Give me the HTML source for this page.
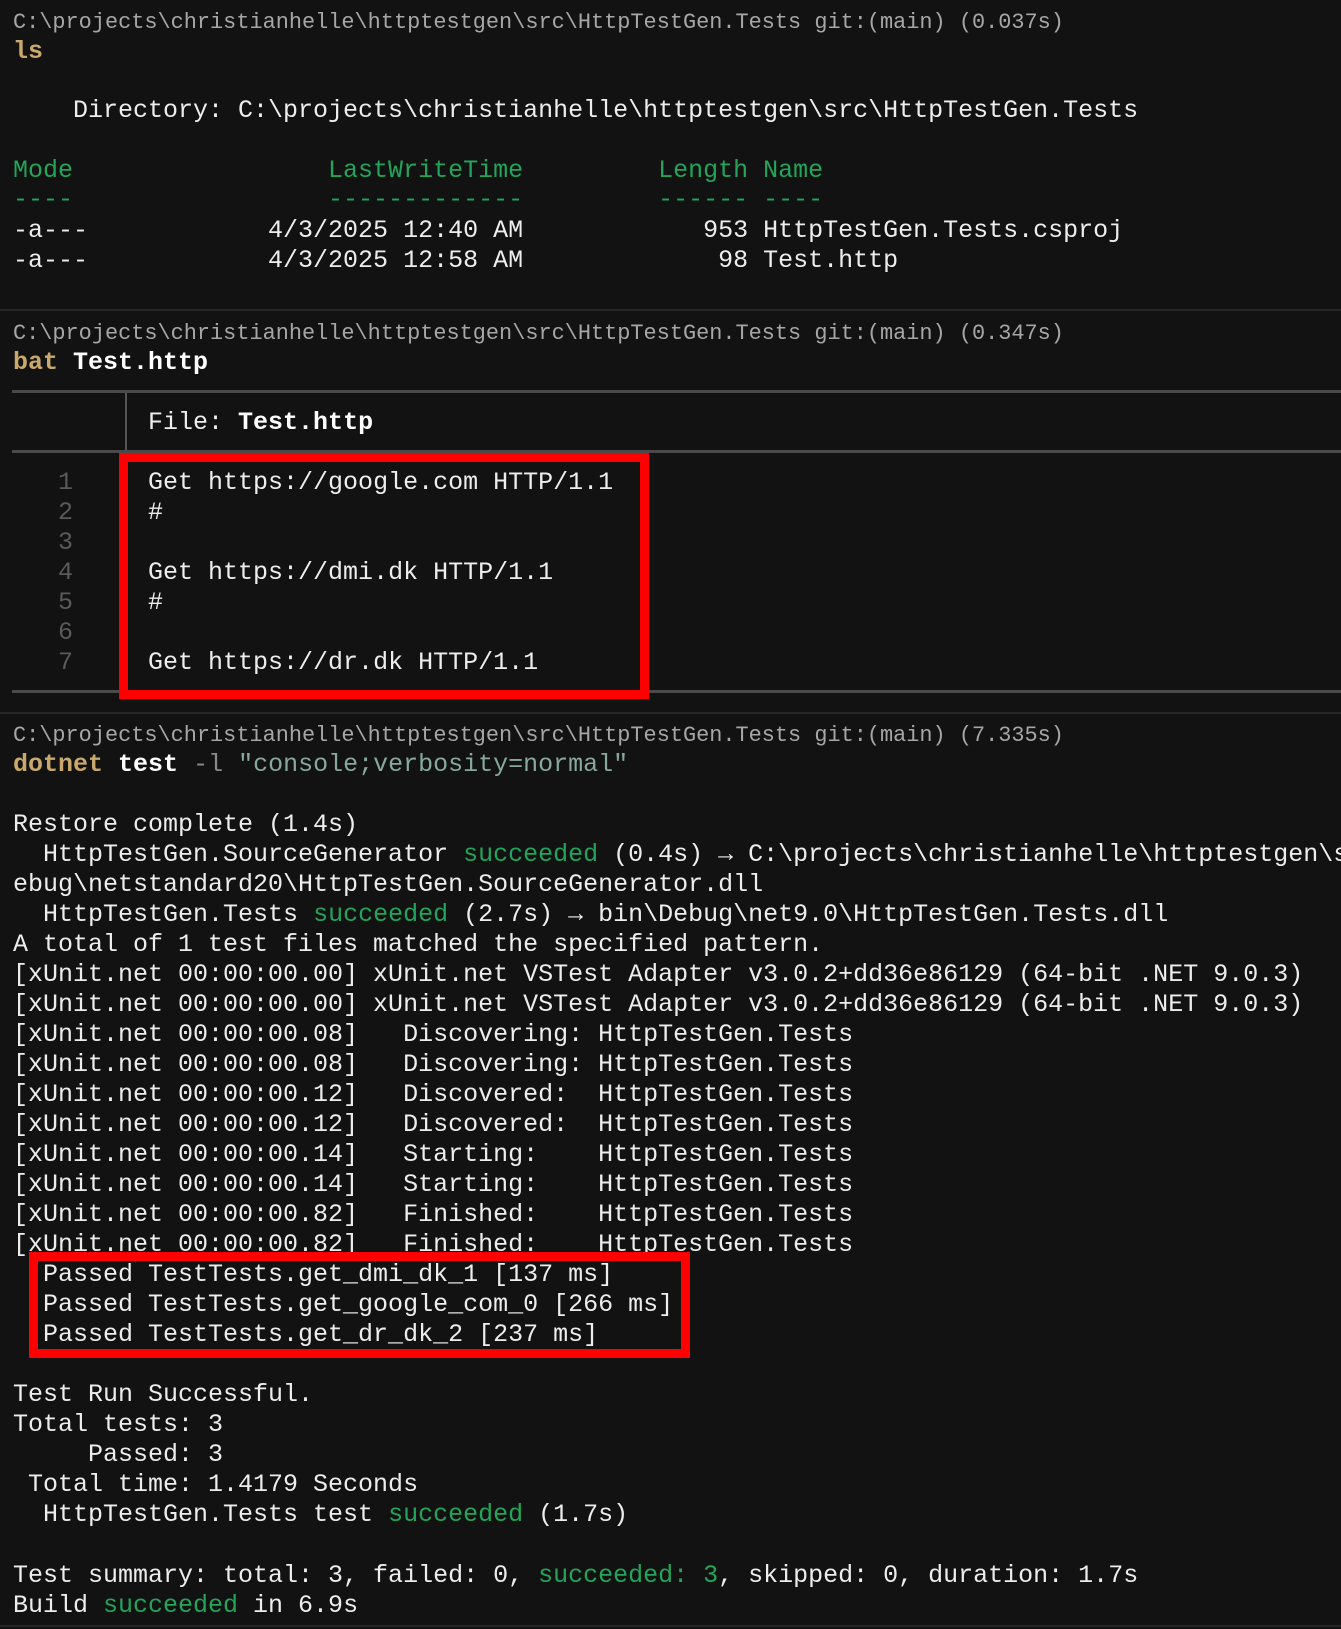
<!DOCTYPE html>
<html><head><meta charset="utf-8"><style>
html,body{margin:0;padding:0;background:#121212;width:1341px;height:1629px;overflow:hidden;position:relative}
.l{position:absolute;left:13px;height:30px;line-height:30px;white-space:pre;font-family:"Liberation Mono","DejaVu Sans Mono",monospace;font-size:25px;color:#ededed;margin-top:2px}
.p{font-size:21.9px;color:#a6a6a6}
.g{color:#22a55a}
.y{color:#c9a86c;font-weight:bold}
.b{font-weight:bold;color:#fff}
.d{color:#8a8a8a}
.s{color:#86a89d}
.n{color:#5a5a5a}
.sep{position:absolute;left:0;width:1341px;height:2px;background:#262626}
.rule{position:absolute;left:12px;width:1329px;height:3px;background:#4a4a4a}
.box{position:absolute;border:9px solid #ff0000;box-sizing:border-box}
</style></head><body>
<div class="l p" style="top:6px">C:\projects\christianhelle\httptestgen\src\HttpTestGen.Tests git:(main) (0.037s)</div>
<div class="l y" style="top:35px">ls</div>
<div class="l" style="top:94px">    Directory: C:\projects\christianhelle\httptestgen\src\HttpTestGen.Tests</div>
<div class="l g" style="top:154px">Mode                 LastWriteTime         Length Name</div>
<div class="l g" style="top:183px">----                 -------------         ------ ----</div>
<div class="l" style="top:214px">-a---            4/3/2025 12:40 AM            953 HttpTestGen.Tests.csproj</div>
<div class="l" style="top:244px">-a---            4/3/2025 12:58 AM             98 Test.http</div>
<div class="sep" style="top:309px"></div>
<div class="l p" style="top:317px">C:\projects\christianhelle\httptestgen\src\HttpTestGen.Tests git:(main) (0.347s)</div>
<div class="l" style="top:346px"><span class="y">bat</span> <span class="b">Test.http</span></div>
<div class="rule" style="top:390px"></div>
<div style="position:absolute;left:125px;top:393px;width:2px;height:57px;background:#555"></div>
<div class="l" style="top:406px">         File: <span class="b">Test.http</span></div>
<div class="rule" style="top:450px"></div>
<div class="l" style="top:466px"><span class="n">   1</span>     Get https://google.com HTTP/1.1</div>
<div class="l" style="top:496px"><span class="n">   2</span>     #</div>
<div class="l" style="top:526px"><span class="n">   3</span></div>
<div class="l" style="top:556px"><span class="n">   4</span>     Get https://dmi.dk HTTP/1.1</div>
<div class="l" style="top:586px"><span class="n">   5</span>     #</div>
<div class="l" style="top:616px"><span class="n">   6</span></div>
<div class="l" style="top:646px"><span class="n">   7</span>     Get https://dr.dk HTTP/1.1</div>
<div class="rule" style="top:690px"></div>
<div class="box" style="left:119px;top:453px;width:530px;height:246px"></div>
<div class="sep" style="top:712px"></div>
<div class="l p" style="top:719px">C:\projects\christianhelle\httptestgen\src\HttpTestGen.Tests git:(main) (7.335s)</div>
<div class="l" style="top:748px"><span class="y">dotnet</span> <span class="b">test</span> <span class="d">-l</span> <span class="s">"console;verbosity=normal"</span></div>
<div class="l" style="top:808px">Restore complete (1.4s)</div>
<div class="l" style="top:838px">  HttpTestGen.SourceGenerator <span class="g">succeeded</span> (0.4s) → C:\projects\christianhelle\httptestgen\src\H</div>
<div class="l" style="top:868px">ebug\netstandard20\HttpTestGen.SourceGenerator.dll</div>
<div class="l" style="top:898px">  HttpTestGen.Tests <span class="g">succeeded</span> (2.7s) → bin\Debug\net9.0\HttpTestGen.Tests.dll</div>
<div class="l" style="top:928px">A total of 1 test files matched the specified pattern.</div>
<div class="l" style="top:958px">[xUnit.net 00:00:00.00] xUnit.net VSTest Adapter v3.0.2+dd36e86129 (64-bit .NET 9.0.3)</div>
<div class="l" style="top:988px">[xUnit.net 00:00:00.00] xUnit.net VSTest Adapter v3.0.2+dd36e86129 (64-bit .NET 9.0.3)</div>
<div class="l" style="top:1018px">[xUnit.net 00:00:00.08]   Discovering: HttpTestGen.Tests</div>
<div class="l" style="top:1048px">[xUnit.net 00:00:00.08]   Discovering: HttpTestGen.Tests</div>
<div class="l" style="top:1078px">[xUnit.net 00:00:00.12]   Discovered:  HttpTestGen.Tests</div>
<div class="l" style="top:1108px">[xUnit.net 00:00:00.12]   Discovered:  HttpTestGen.Tests</div>
<div class="l" style="top:1138px">[xUnit.net 00:00:00.14]   Starting:    HttpTestGen.Tests</div>
<div class="l" style="top:1168px">[xUnit.net 00:00:00.14]   Starting:    HttpTestGen.Tests</div>
<div class="l" style="top:1198px">[xUnit.net 00:00:00.82]   Finished:    HttpTestGen.Tests</div>
<div class="l" style="top:1228px">[xUnit.net 00:00:00.82]   Finished:    HttpTestGen.Tests</div>
<div class="l" style="top:1258px">  Passed TestTests.get_dmi_dk_1 [137 ms]</div>
<div class="l" style="top:1288px">  Passed TestTests.get_google_com_0 [266 ms]</div>
<div class="l" style="top:1318px">  Passed TestTests.get_dr_dk_2 [237 ms]</div>
<div class="box" style="left:29px;top:1252px;width:661px;height:106px"></div>
<div class="l" style="top:1378px">Test Run Successful.</div>
<div class="l" style="top:1408px">Total tests: 3</div>
<div class="l" style="top:1438px">     Passed: 3</div>
<div class="l" style="top:1468px"> Total time: 1.4179 Seconds</div>
<div class="l" style="top:1498px">  HttpTestGen.Tests test <span class="g">succeeded</span> (1.7s)</div>
<div class="l" style="top:1559px">Test summary: total: 3, failed: 0, <span class="g">succeeded: 3</span>, skipped: 0, duration: 1.7s</div>
<div class="l" style="top:1589px">Build <span class="g">succeeded</span> in 6.9s</div>
<div class="sep" style="top:1625px"></div>
</body></html>
